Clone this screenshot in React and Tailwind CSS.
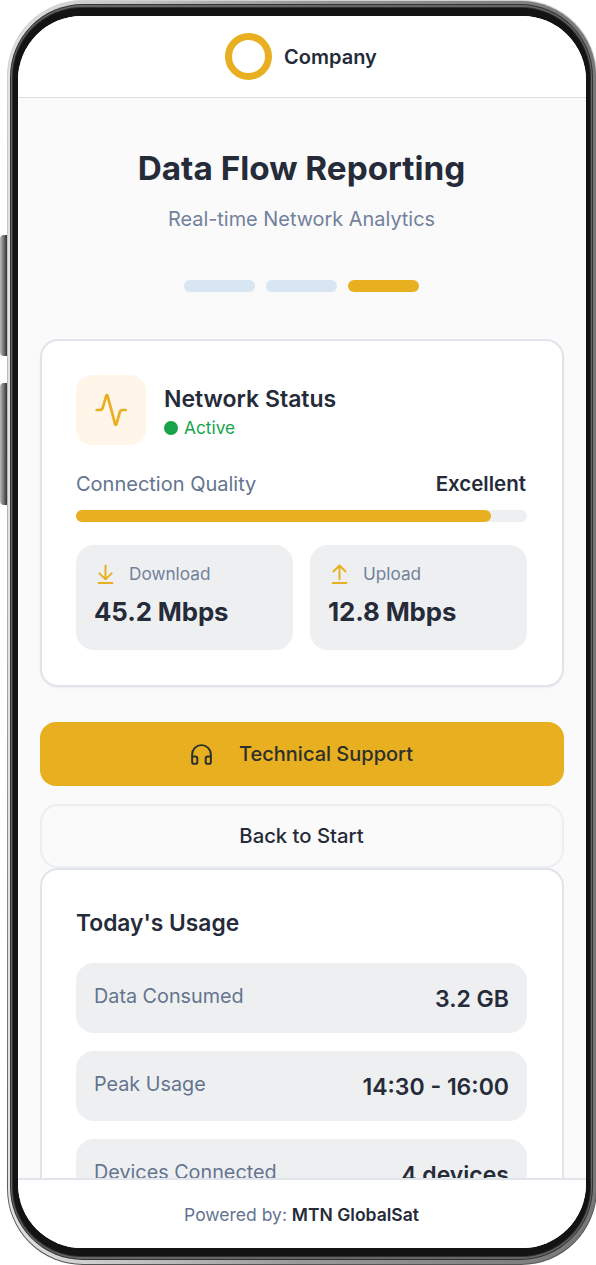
import React from 'react';
import { Headphones } from 'lucide-react';

const steps = [
  { id: 1, active: false },
  { id: 2, active: false },
  { id: 3, active: true },
];

const usage = [
  { label: 'Data Consumed', value: '3.2 GB' },
  { label: 'Peak Usage', value: '14:30 - 16:00' },
  { label: 'Devices Connected', value: '4 devices' },
];

const DownloadIcon = () => (
  <svg width="22" height="22" viewBox="0 0 22 22" fill="none" stroke="#e8b020" strokeWidth="2" strokeLinecap="round" strokeLinejoin="round">
    <path d="M11.5 2.5v13.8M5.4 10.4l6.1 6 6.1-6M4.6 20h13.8" />
  </svg>
);

const UploadIcon = () => (
  <svg width="22" height="22" viewBox="0 0 22 22" fill="none" stroke="#e8b020" strokeWidth="2" strokeLinecap="round" strokeLinejoin="round">
    <path d="M11.5 16.3V2.5M5.4 8.5l6.1-6 6.1 6M4.6 20h13.8" />
  </svg>
);

const SpeedTile = ({ icon: Icon, label, value }) => (
  <div className="flex-1 h-[105px] rounded-[18px] bg-[#eeeff1] px-[18px] pt-[17px]">
    <div className="flex items-center h-6 gap-[13px]">
      <Icon />
      <span className="text-[17.2px] leading-6 text-[#72819b]">{label}</span>
    </div>
    <p className="mt-[10px] text-[25.8px] leading-8 font-bold tracking-[-0.1px] text-[#252b39]">{value}</p>
  </div>
);

const NetworkCard = () => (
  <section className="h-[348px] shrink-0 rounded-[18px] border-2 border-[#e2e4eb] bg-white pl-[34px] pr-[35px] pt-[34px] shadow-xs">
    <div className="flex h-[70px] gap-[18px]">
      <div className="flex items-center justify-center w-[70px] h-[70px] rounded-[16px] bg-[#fff5e8]">
        <svg width="36" height="36" viewBox="0 0 36 36" fill="none" stroke="#e8b020" strokeWidth="2.7" strokeLinecap="round" strokeLinejoin="round">
          <path d="M3.7 18h3.2a2.9 2.9 0 0 0 2.8-2.1l3.6-12.3c.2-.6 1-.6 1.2 0l7.7 28.8c.2.6 1 .6 1.2 0l3.4-12.3a2.9 2.9 0 0 1 2.8-2.1h3" />
        </svg>
      </div>
      <div className="pt-2">
        <h2 className="text-[23px] leading-8 font-semibold text-[#252b39]">Network Status</h2>
        <div className="flex items-center gap-[6px] h-6 mt-px text-[#17a34a]">
          <span className="w-[14px] h-[14px] rounded-full bg-[#17a34a]" />
          <span className="text-[17.3px] leading-6">Active</span>
        </div>
      </div>
    </div>
    <div className="flex justify-between mt-[25px] leading-7">
      <span className="text-xl leading-7 text-[#64748f]">Connection Quality</span>
      <span className="pr-px text-[20.5px] leading-7 font-semibold text-[#252b39]">Excellent</span>
    </div>
    <div className="mt-3 h-3 rounded-full bg-[#eeeff1]">
      <div className="h-3 w-[92%] rounded-full bg-[#e8b020]" />
    </div>
    <div className="flex gap-[17px] mt-[23px]">
      <SpeedTile icon={DownloadIcon} label="Download" value="45.2 Mbps" />
      <SpeedTile icon={UploadIcon} label="Upload" value="12.8 Mbps" />
    </div>
  </section>
);

const UsageCard = () => (
  <section className="h-[420px] shrink-0 rounded-[18px] border-2 border-[#e2e4eb] bg-white pl-[34px] pr-[35px] pt-[37px]">
    <h2 className="text-[22.8px] leading-8 font-semibold text-[#252b39]">Today's Usage</h2>
    <div className="flex flex-col mt-6 gap-[18px]">
      {usage.map((item) => (
        <div key={item.label} className="flex justify-between h-[70px] rounded-[18px] bg-[#eeeff1] px-[18px]">
          <span className="pt-[18px] text-[19.8px] leading-[30px] text-[#64748f]">{item.label}</span>
          <span className="pt-5 text-[23px] leading-8 font-semibold text-[#252b39]">{item.value}</span>
        </div>
      ))}
    </div>
  </section>
);

const PhoneFrame = ({ children }) => (
  <div className="relative w-[596px] h-[1265px] overflow-hidden bg-white font-[Inter,sans-serif]">
    {/* volume buttons */}
    <div className="absolute left-0 top-[235px] w-[7px] h-[121px] rounded-l-sm bg-linear-to-r from-[#bbb] via-[#777] to-[#333]" />
    <div className="absolute left-0 top-[383px] w-[7px] h-[122px] rounded-l-sm bg-linear-to-r from-[#bbb] via-[#777] to-[#333]" />

    {/* metal edge, from the outside in */}
    <div className="ml-[7px] w-[590px] h-[1265px] rounded-[76px] bg-linear-to-b from-[#d2d3d2] via-[#aaa] to-[#555] p-px">
      <div className="h-full rounded-[75px] bg-linear-to-r from-[#e2e2e2] via-[#999] to-[#777] pt-[3px] pr-[3px] pb-[4px] pl-[2px]">
        <div className="h-full rounded-[73px] bg-[#333] p-px">
          <div className="h-full rounded-[72px] bg-[#666] pt-[2px] pr-px pb-[2px] pl-px">
            <div className="h-full rounded-[70px] bg-[#303030] p-px">
              <div className="h-full rounded-[69px] bg-[#131313] pt-2 pb-2 pl-[5px] pr-1">
                <div className="flex flex-col h-full overflow-hidden rounded-[64px] bg-[#fafafb]">
                  {children}
                </div>
              </div>
            </div>
          </div>
        </div>
      </div>
    </div>
  </div>
);

const App = () => (
  <PhoneFrame>
    <header className="flex items-center justify-center gap-3 h-[82px] shrink-0 border-b border-[#dcdee7] bg-white pr-[2px]">
      <div className="w-[47px] h-[47px] rounded-full border-[7px] border-[#e8b020]" />
      <span className="text-xl font-semibold text-[#252b39]">Company</span>
    </header>

    <main className="flex flex-col flex-1 min-h-0 overflow-hidden px-[22px]">
      <div className="pt-12 pr-px text-center">
        <h1 className="text-[33.3px] leading-[44px] font-bold text-[#252b39]">Data Flow Reporting</h1>
        <p className="mt-[15px] text-[19.9px] leading-7 text-[#72819b]">Real-time Network Analytics</p>
      </div>
      <div className="flex justify-center gap-[11px] mt-[47px] mb-[47px] pr-[2px]">
        {steps.map((step) => (
          <span key={step.id} className={`w-[71px] h-3 rounded-full ${step.active ? 'bg-[#e8b020]' : 'bg-[#d8e5f2]'}`} />
        ))}
      </div>

      <NetworkCard />

      <button className="flex items-center justify-center gap-[25px] mt-[35px] h-16 shrink-0 rounded-[16px] bg-[#e8b020] pr-[2px] text-xl font-medium text-[#2c2f2c]">
        <Headphones size={25} strokeWidth={1.9} />
        Technical Support
      </button>
      <button className="mt-[18px] h-16 shrink-0 rounded-[18px] border-2 border-[#eceef0] pr-px text-[20.3px] font-medium text-[#252b39]">
        Back to Start
      </button>

      <UsageCard />
    </main>

    <footer className="flex items-center justify-center h-[70px] shrink-0 border-t-2 border-[#e2e4eb] bg-white pt-[2px] pr-px text-[17.5px] text-[#64748f]">
      <p>
        Powered by: <span className="font-semibold text-[#252b39]">MTN GlobalSat</span>
      </p>
    </footer>
  </PhoneFrame>
);

export default App;
